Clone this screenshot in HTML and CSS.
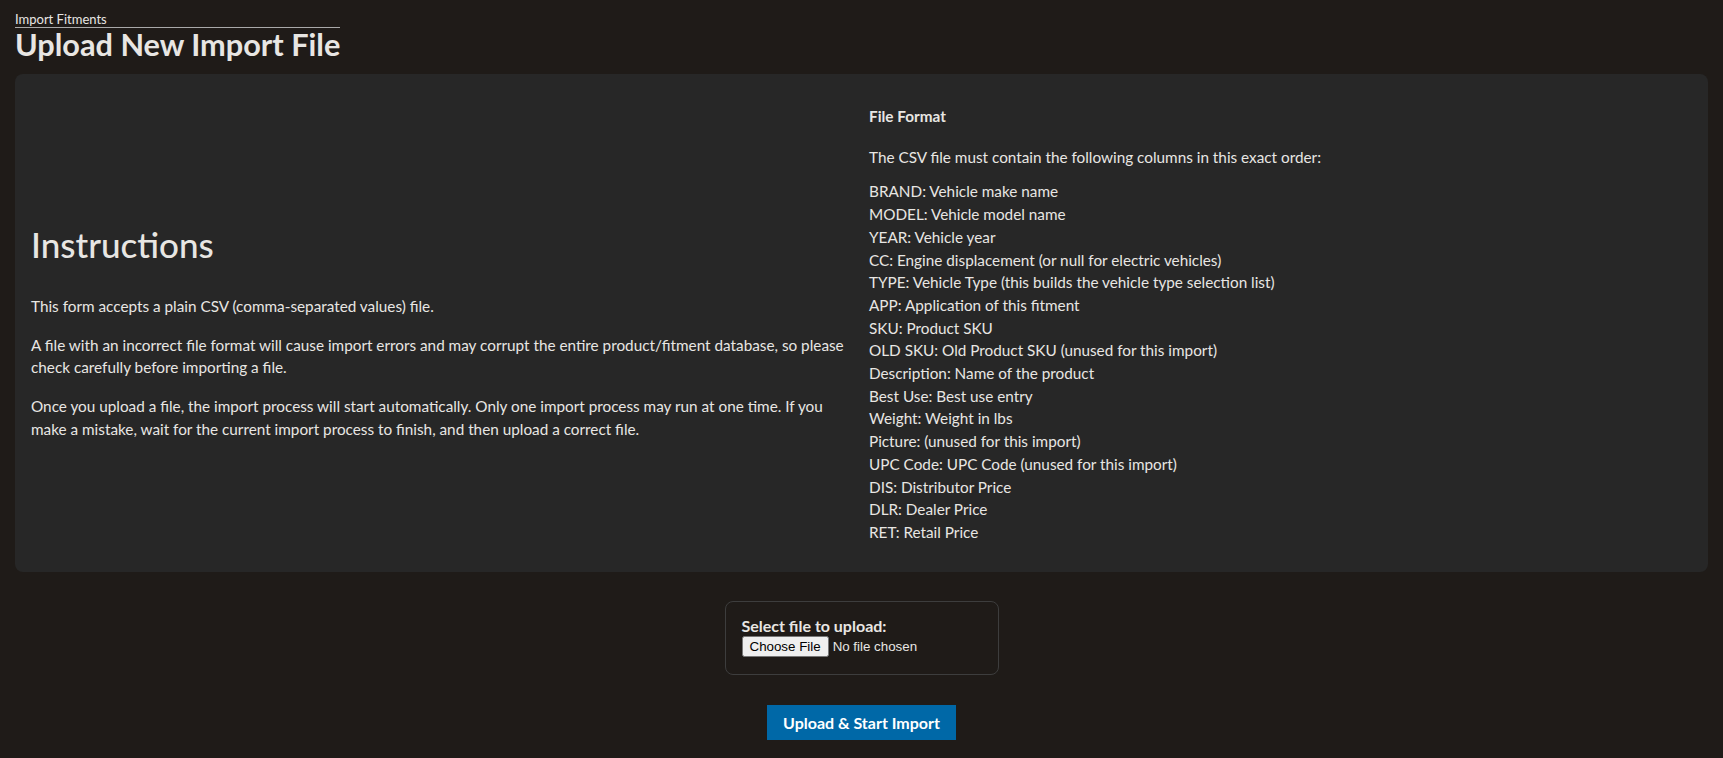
FILE: index.html
```html
<!DOCTYPE html>
<html>
<head>
	<title>Upload New Import File</title>
	<link rel="stylesheet" href="styles.css">
</head>
<body>
	<header class="page-head">
		<div class="crumb">Import Fitments</div>
		<h1 class="page-title">Upload New Import File</h1>
	</header>

	<section class="panel">
		<div class="col instructions">
			<h2>Instructions</h2>
			<p>This form accepts a plain CSV (comma-separated values) file.</p>
			<p>A file with an incorrect file format will cause import errors and may corrupt the entire product/fitment database, so please check carefully before importing a file.</p>
			<p>Once you upload a file, the import process will start automatically. Only one import process may run at one time. If you make a mistake, wait for the current import process to finish, and then upload a correct file.</p>
		</div>

		<div class="col file-format">
			<h6>File Format</h6>
			<p>The CSV file must contain the following columns in this exact order:</p>
			<ul class="columns">
				<li>BRAND: Vehicle make name</li>
				<li>MODEL: Vehicle model name</li>
				<li>YEAR: Vehicle year</li>
				<li>CC: Engine displacement (or null for electric vehicles)</li>
				<li>TYPE: Vehicle Type (this builds the vehicle type selection list)</li>
				<li>APP: Application of this fitment</li>
				<li>SKU: Product SKU</li>
				<li>OLD SKU: Old Product SKU (unused for this import)</li>
				<li>Description: Name of the product</li>
				<li>Best Use: Best use entry</li>
				<li>Weight: Weight in lbs</li>
				<li>Picture: (unused for this import)</li>
				<li>UPC Code: UPC Code (unused for this import)</li>
				<li>DIS: Distributor Price</li>
				<li>DLR: Dealer Price</li>
				<li>RET: Retail Price</li>
			</ul>
		</div>
	</section>

	<form class="upload-form" onsubmit="return false;">
		<div class="file-box">
			<label for="importFile">Select file to upload:</label>
			<input type="file" id="importFile" name="importFile" accept=".csv">
		</div>
		<button type="submit" class="btn-upload">Upload &amp; Start Import</button>
	</form>
</body>
</html>
```

FILE: styles.css
```css
body {
	margin: 0;
	padding: 11px 15px 18px;
	background-color: #1f1b18;
	color: #e8e6e3;
	font-family: Lato, "Noto Sans", sans-serif;
	font-size: 15.3px;
}

.page-head {
	display: inline-block;
}

.crumb {
	font-size: 13px;
	line-height: 16px;
	border-bottom: 1px solid #a9a9a9;
}

.page-title {
	margin: 0;
	font-size: 30.7px;
	font-weight: 700;
	line-height: 34px;
}

.panel {
	display: grid;
	grid-template-columns: 1fr 1fr;
	column-gap: 15px;
	align-items: center;
	margin-top: 12px;
	padding: 31px 16px 28px;
	background-color: #272727;
	border-radius: 8px;
}

.panel p {
	margin: 0 0 16px;
	line-height: 22.7px;
}

.instructions {
	padding-top: 15px;
}

.instructions h2 {
	margin: 0 0 30px;
	font-size: 35px;
	font-weight: 500;
	line-height: 42px;
}

.instructions p:last-child {
	margin-bottom: 0;
}

.file-format h6 {
	margin: 0 0 18px;
	font-size: 15.3px;
	font-weight: 700;
	line-height: 22.7px;
}

.file-format p {
	margin-bottom: 12px;
}

.columns {
	margin: 0;
	padding: 0;
	list-style: none;
	line-height: 22.7px;
}

.upload-form {
	display: flex;
	flex-direction: column;
	align-items: center;
	margin-top: 29px;
}

.file-box {
	width: 274px;
	box-sizing: border-box;
	padding: 13px 16px 17px;
	border: 1px solid #3d3d3d;
	border-radius: 8px;
}

.file-box label {
	display: block;
	font-size: 16px;
	font-weight: 700;
	line-height: 21px;
}

.file-box input {
	font-family: "Liberation Sans", Arial, sans-serif;
	font-size: 13.33px;
	color: #e8e6e3;
}

.btn-upload {
	margin-top: 30px;
	width: 189px;
	height: 35px;
	border: none;
	background-color: #0068a7;
	color: #ffffff;
	font-family: Lato, "Noto Sans", sans-serif;
	font-size: 16px;
	font-weight: 700;
	cursor: pointer;
}
```
